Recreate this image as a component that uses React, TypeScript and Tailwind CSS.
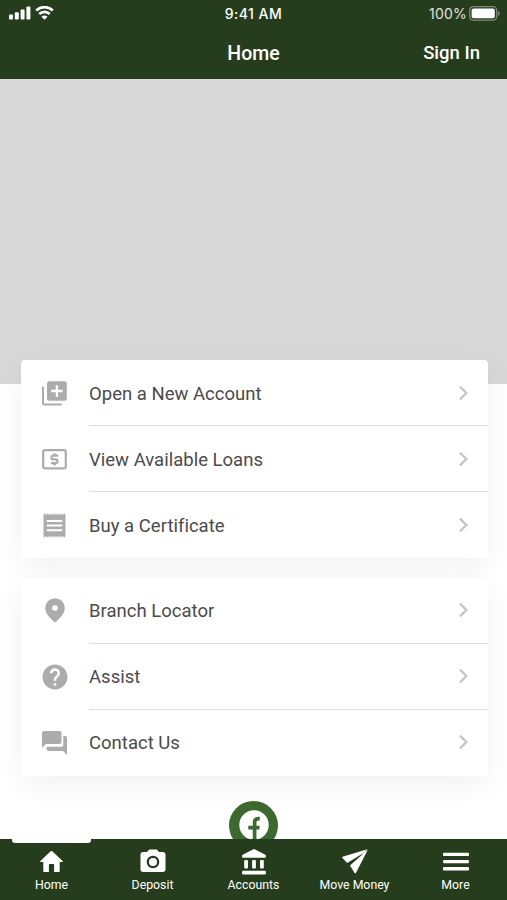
import type { ReactNode } from 'react';
import { MdHelp, MdPhotoCamera } from 'react-icons/md';

const accountLinks = [
  { label: 'Open a New Account', icon: <AddAccountIcon /> },
  { label: 'View Available Loans', icon: <LoanIcon /> },
  { label: 'Buy a Certificate', icon: <CertificateIcon /> },
];

const supportLinks = [
  { label: 'Branch Locator', icon: <PinIcon /> },
  { label: 'Assist', icon: <MdHelp size={30} /> },
  { label: 'Contact Us', icon: <ChatIcon /> },
];

const tabs = [
  { label: 'Home', icon: <HomeIcon /> },
  { label: 'Deposit', icon: <MdPhotoCamera size={30} /> },
  { label: 'Accounts', icon: <BankIcon /> },
  { label: 'Move Money', icon: <PlaneIcon /> },
  { label: 'More', icon: <MenuIcon /> },
];

function AddAccountIcon() {
  return (
    <svg width="25" height="25" viewBox="0 0 25 25">
      <path d="M1 5.5v16.500a1.5 1.5 0 0 0 1.5 1.5H19.7" fill="none" stroke="currentColor" strokeWidth="2" />
      <rect x="5" y="0.2" width="19.8" height="19.6" rx="2.5" fill="currentColor" />
      <path d="M14.9 4.3v11.4M9.2 10h11.4" stroke="#fff" strokeWidth="2.3" />
    </svg>
  );
}

function LoanIcon() {
  return (
    <svg width="25" height="21" viewBox="0 0 25 21" fill="none" stroke="currentColor" strokeWidth="2.2">
      <rect x="1.2" y="1.2" width="22.6" height="18.2" rx="1.8" />
      <path
        d="M16.2 6.700h-5.400a1.2 1.2 0 0 0-1.200 1.200v1.300a1.2 1.2 0 0 0 1.200 1.200h3.400a1.2 1.2 0 0 1 1.200 1.200v1.300a1.2 1.2 0 0 1-1.200 1.200H8.800M12.500 4.200v2.500M12.500 14v2.500"
        strokeWidth="2.3"
      />
    </svg>
  );
}

function CertificateIcon() {
  return (
    <svg width="23" height="25" viewBox="0 0 23 25">
      <rect x="0.5" y="1.8" width="22" height="21.4" fill="currentColor" />
      <path d="M1 1.400h21.500M1 23.600h21.500" stroke="currentColor" strokeWidth="1.2" strokeDasharray="1.5 1.3" />
      <path d="M3.700 7.900h15.600M3.700 12.500h15.600M3.700 17.200h15.600" stroke="#fff" strokeWidth="2" />
    </svg>
  );
}

function PinIcon() {
  return (
    <svg width="20" height="25" viewBox="0 0 20 25" fill="currentColor">
      <path
        fillRule="evenodd"
        d="M10 0.200a9.800 9.800 0 0 1 9.800 9.800c0 5-4.300 9.600-8.800 13.800a1.500 1.500 0 0 1-2 0C4.500 19.600.2 15 .2 10A9.800 9.800 0 0 1 10 .2zM10 7.200a2.800 2.800 0 1 0 0 5.600 2.800 2.800 0 0 0 0-5.600z"
      />
    </svg>
  );
}

function ChatIcon() {
  return (
    <svg width="25" height="24" viewBox="0 0 25 24" fill="currentColor">
      <path d="M2 0h15.500a2 2 0 0 1 2 2v9a2 2 0 0 1-2 2H4l-4 4V2a2 2 0 0 1 2-2z" />
      <path d="M21.300 5h2A1.700 1.700 0 0 1 25 6.700V24l-4-4H6.500a2 2 0 0 1-2-2v-2.200h14.800a2 2 0 0 0 2-2z" />
    </svg>
  );
}

function HomeIcon() {
  return (
    <svg width="23" height="21" viewBox="0 0 23 21" fill="currentColor">
      <path d="M10.700.3a1.200 1.200 0 0 1 1.600 0l10.300 9.600c.5.500.3 1.100-.4 1.100h-2.500v8.900c0 .6-.4 1-1 1h-4.600v-6.900c0-.6-.3-.9-.9-.9H9.800c-.6 0-.9.300-.9.900v6.900H4.300c-.6 0-1-.4-1-1V11H.8c-.7 0-.9-.6-.4-1.100z" />
    </svg>
  );
}

function BankIcon() {
  return (
    <svg width="24" height="26" viewBox="0 0 24 26" fill="currentColor">
      <path d="M11.400.3a1.400 1.400 0 0 1 1.200 0l10.700 5.400c.4.200.6.500.6.900v1.200c0 .5-.4.900-.9.900H1a.9.900 0 0 1-.9-.9V6.600c0-.4.200-.7.600-.9z" />
      <rect x="2.2" y="11" width="3.8" height="8.600" rx="1" />
      <rect x="10.1" y="11" width="3.8" height="8.600" rx="1" />
      <rect x="18" y="11" width="3.8" height="8.600" rx="1" />
      <rect x="0.1" y="21.800" width="23.8" height="3.800" rx="1.3" />
    </svg>
  );
}

function PlaneIcon() {
  return (
    <svg width="26" height="25" viewBox="0 0 26 25" fill="currentColor">
      <path d="M25.300.2.600 7.800c-.6.200-.7.600-.3 1L5.100 14 19.500 5.300z" />
      <path d="M25.900.6 8 16.500l4.600 7.500c.4.600 1 .5 1.300-.1z" />
      <path d="M19.500 5.300 25.600.4 22 5z" />
    </svg>
  );
}

function MenuIcon() {
  return (
    <svg width="26" height="20" viewBox="0 0 26 20" fill="currentColor">
      <rect y="0.7" width="26" height="3.4" rx="1.2" />
      <rect y="7.9" width="26" height="3.4" rx="1.2" />
      <rect y="15.1" width="26" height="3.4" rx="1.2" />
    </svg>
  );
}

function FacebookIcon() {
  return (
    <svg width="30" height="30" viewBox="0 0 30 30">
      <circle cx="15" cy="15" r="14.7" fill="#fff" />
      <path
        d="M20.800 8.700h-1.500c-2.500 0-3.700 1.300-3.700 3.600V29.500M9.300 17.700h11.200"
        fill="none"
        stroke="#3c6a2e"
        strokeWidth="3.7"
      />
    </svg>
  );
}

function SignalIcon() {
  return (
    <svg width="22" height="14" viewBox="0 0 22 14" fill="currentColor">
      <rect x="0" y="8.5" width="4" height="5" rx="1" />
      <rect x="5.8" y="6.2" width="4" height="7.3" rx="1" />
      <rect x="11.6" y="3.4" width="4" height="10.1" rx="1" />
      <rect x="17.4" y="0.5" width="4" height="13" rx="1" />
    </svg>
  );
}

function WifiIcon() {
  return (
    <svg width="19" height="14" viewBox="0 0 19 14" fill="none" stroke="currentColor" strokeWidth="2.6">
      <path d="M1.200 4.500a11.800 11.800 0 0 1 16.600 0" />
      <path d="M4.300 8a7.400 7.400 0 0 1 10.400 0" />
      <path d="M9.500 13.800 6.500 10.800a4.200 4.200 0 0 1 6 0z" fill="currentColor" stroke="none" />
    </svg>
  );
}

function BatteryIcon() {
  return (
    <svg width="31" height="15" viewBox="0 0 31 15">
      <rect x="0.7" y="0.7" width="27" height="13.4" rx="3.6" fill="none" stroke="#fff" strokeOpacity="0.4" strokeWidth="1.3" />
      <rect x="2.6" y="2.6" width="23.2" height="9.6" rx="2" fill="#fff" />
      <path d="M29 5v5c1-.4 1.700-1.300 1.700-2.500S30 5.400 29 5z" fill="#fff" fillOpacity="0.4" />
    </svg>
  );
}

function Chevron() {
  return (
    <svg width="10" height="16" viewBox="0 0 10 16" fill="none" stroke="#c4c4c4" strokeWidth="2.2">
      <path d="m1 1.600 6.400 6.400L1 14.400" />
    </svg>
  );
}

function LinkCard({ links }: { links: { label: string; icon: ReactNode }[] }) {
  return (
    <div className="rounded-[4px] bg-white shadow-[0_8px_30px_rgba(0,0,0,0.06)]">
      {links.map((link, i) => (
        <a key={link.label} className="flex h-[66px] items-center">
          <span className="flex w-[68px] justify-center pr-px text-[#acacac]">{link.icon}</span>
          <span
            className={`flex h-full flex-1 items-center justify-between border-b pr-[19px] text-[18.5px] tracking-[0.01px] text-[#4b4b4b] ${
              i < links.length - 1 ? 'border-[#dedede]' : 'border-transparent'
            }`}
          >
            <span className="pt-[4px]">{link.label}</span>
            <Chevron />
          </span>
        </a>
      ))}
    </div>
  );
}

export default function App() {
  return (
    <div className="flex h-[900px] w-[507px] flex-col overflow-hidden bg-white font-[Roboto,sans-serif]">
      <header className="h-[79px] shrink-0 bg-[#263d1d] text-white">
        <div className="grid h-[27px] grid-cols-3 items-center px-[7px] font-[Inter,sans-serif] text-[14px]">
          <div className="flex items-center gap-1 pb-px pl-[2px]">
            <SignalIcon />
            <WifiIcon />
          </div>
          <div className="pb-px text-center font-medium tracking-[0.5px]">9:41 AM</div>
          <div className="flex items-center justify-end gap-[2px]">
            <span className="pb-px tracking-[0.2px] text-white/85">100%</span>
            <BatteryIcon />
          </div>
        </div>
        <div className="grid h-[52px] grid-cols-3 items-center px-[27px] pt-[2px] font-medium">
          <h1 className="col-start-2 text-center text-[19.5px]">Home</h1>
          <a className="text-right text-[18.5px]">Sign In</a>
        </div>
      </header>

      <main className="min-h-0 flex-1 overflow-hidden">
        <div className="h-[305px] bg-[#d8d8d8]" />
        <div className="relative -mt-6 flex flex-col gap-[19.5px] pr-[19px] pl-[21px]">
          <LinkCard links={accountLinks} />
          <LinkCard links={supportLinks} />
        </div>
        <div className="mt-[25px] flex justify-center">
          <div className="flex size-[49px] items-center justify-center rounded-full bg-[#3c6a2e]">
            <FacebookIcon />
          </div>
        </div>
      </main>

      <nav className="relative grid h-[61px] shrink-0 grid-cols-5 bg-[#263d1d] px-[1px] text-white">
        <div className="absolute left-[12px] h-[4px] w-[79px] rounded-b-[3px] bg-white" />
        {tabs.map((tab) => (
          <a key={tab.label} className="flex flex-col items-center pt-[8px]">
            <span className="flex h-[29px] items-center">{tab.icon}</span>
            <span className="text-[12.3px] leading-[18px] whitespace-nowrap">{tab.label}</span>
          </a>
        ))}
      </nav>
    </div>
  );
}
